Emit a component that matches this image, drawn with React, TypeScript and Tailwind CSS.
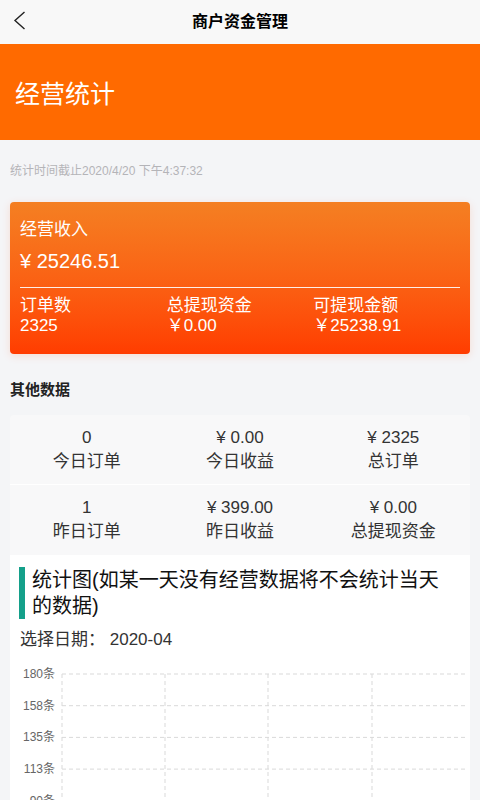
const FONT = { fontFamily: '"Liberation Sans", "Noto Sans CJK SC", sans-serif' }

const OTHER_ROWS = [
  [
    { value: '0', label: '今日订单' },
    { value: '¥ 0.00', label: '今日收益' },
    { value: '¥ 2325', label: '总订单' },
  ],
  [
    { value: '1', label: '昨日订单' },
    { value: '¥ 399.00', label: '昨日收益' },
    { value: '¥ 0.00', label: '总提现资金' },
  ],
]

const Y_TICKS = ['180条', '158条', '135条', '113条', '90条', '68条']

function Chart() {
  const top = 8
  const step = 31.7
  const xs = [52, 155, 258, 362]
  return (
    <svg width="460" height="190" viewBox="0 0 460 190" className="block">
      {Y_TICKS.map((t, i) => {
        const y = top + i * step
        return (
          <g key={t}>
            <line x1="52" y1={y} x2="456" y2={y} stroke="#d9d9d9" strokeWidth="1" strokeDasharray="4 3" />
            <text
              x="45"
              y={y + 4}
              textAnchor="end"
              fontSize="12"
              fill="#666"
              fontFamily='"Liberation Sans", "Noto Sans CJK SC", sans-serif'
            >
              {t}
            </text>
          </g>
        )
      })}
      {xs.map((x) => (
        <line key={x} x1={x} y1={top} x2={x} y2="190" stroke="#d9d9d9" strokeWidth="1" strokeDasharray="4 3" />
      ))}
    </svg>
  )
}

export default function App() {
  return (
    <div className="min-h-[800px] w-[480px] bg-[#f4f5f7] text-[#333]" style={FONT}>
      {/* Nav bar */}
      <div className="relative flex h-[44px] items-center justify-center bg-[#f8f8f8]">
        <svg className="absolute left-[12px] top-[10px]" width="16" height="22" viewBox="0 0 16 22" fill="none">
          <polyline points="12.5,2 3,10.5 12.5,19" stroke="#222" strokeWidth="1.4" />
        </svg>
        <h1 className="text-[16px] font-bold text-black">商户资金管理</h1>
      </div>

      {/* Banner */}
      <div className="flex h-[96px] items-center bg-[#ff6a00] px-[15px] pt-[6px]">
        <h2 className="text-[25px] text-white">经营统计</h2>
      </div>

      {/* Timestamp */}
      <p className="px-[10px] pt-[22px] text-[12px] text-[#b4b4b8]">统计时间截止2020/4/20 下午4:37:32</p>

      {/* Income card */}
      <div className="mx-[10px] mt-[22px] rounded-[4px] bg-gradient-to-b from-[#f47f22] to-[#ff3c00] px-[10px] pb-[18px] pt-[16px] text-white shadow-[0_2px_8px_rgba(255,80,0,0.15)]">
        <p className="text-[17px] leading-[24px]">经营收入</p>
        <p className="mt-[6px] text-[20px] leading-[26px]">¥ 25246.51</p>
        <div className="mt-[13px] h-px bg-white/90" />
        <div className="mt-[8px] grid grid-cols-3 text-[17px] leading-[20px]">
          <div>
            <p>订单数</p>
            <p>2325</p>
          </div>
          <div>
            <p>总提现资金</p>
            <p>￥0.00</p>
          </div>
          <div>
            <p>可提现金额</p>
            <p>￥25238.91</p>
          </div>
        </div>
      </div>

      {/* Other data */}
      <h3 className="px-[10px] pt-[26px] text-[15px] font-bold leading-[20px] text-[#222]">其他数据</h3>
      <div className="mx-[10px] mt-[15px] overflow-hidden rounded-t-[4px] bg-[#f8f8f9]">
        {OTHER_ROWS.map((row, ri) => (
          <div key={ri} className={`grid h-[70px] grid-cols-3 items-center ${ri === 0 ? 'border-b border-white' : ''}`}>
            {row.map((c) => (
              <div key={c.label} className="flex flex-col items-center text-[17px] leading-[24px] text-[#333]">
                <span>{c.value}</span>
                <span>{c.label}</span>
              </div>
            ))}
          </div>
        ))}
      </div>

      {/* Chart panel */}
      <div className="mx-[10px] bg-white pt-[12px]">
        <div className="flex pl-[9px] pr-[20px]">
          <div className="w-[6px] shrink-0 bg-[#14a08a]" />
          <p className="pl-[7px] text-[20px] leading-[26px] text-[#111]">统计图(如某一天没有经营数据将不会统计当天的数据)</p>
        </div>
        <p className="mt-[9px] px-[10px] text-[17px] leading-[24px] text-[#333]">选择日期： 2020-04</p>
        <div className="mt-[14px]">
          <Chart />
        </div>
      </div>
    </div>
  )
}
